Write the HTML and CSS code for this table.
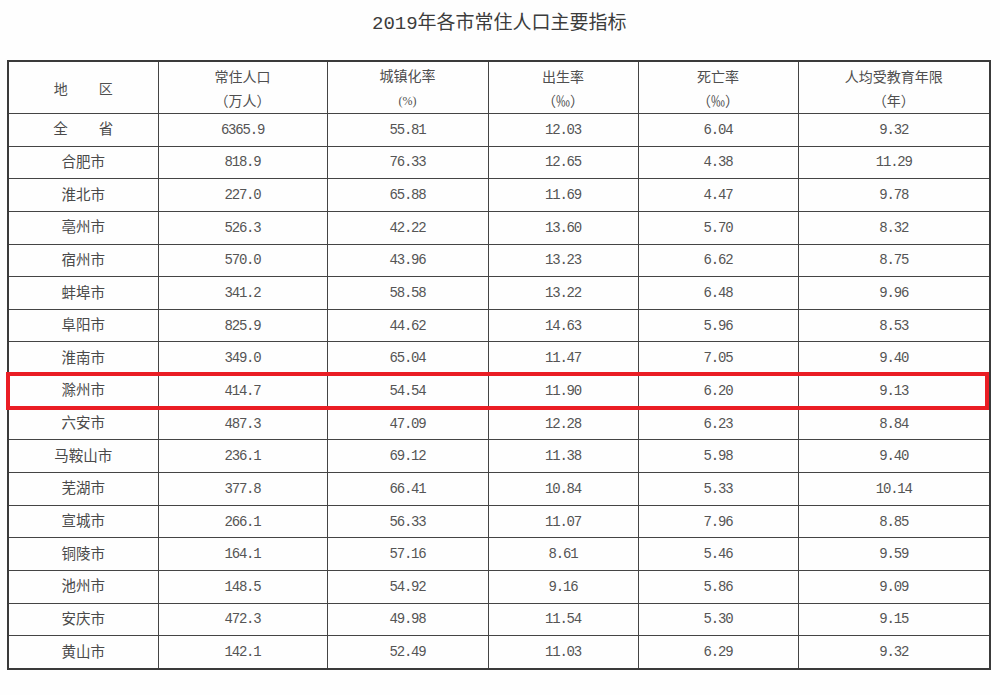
FILE: index.html
```html
<!DOCTYPE html>
<html lang="zh">
<head>
<meta charset="utf-8">
<link rel="stylesheet" href="styles.css">
</head>
<body>
<div class="page">
  <div class="title">2019年各市常住人口主要指标</div>
  <div class="wrap">
    <table class="data">
      <colgroup>
        <col class="c1"><col class="c2"><col class="c3"><col class="c4"><col class="c5"><col class="c6">
      </colgroup>
      <thead>
        <tr>
          <th><span class="spread">地<span class="gap"></span>区</span></th>
          <th>常住人口<br>（万人）</th>
          <th>城镇化率<br><span class="pct">(%)</span></th>
          <th>出生率<br>（‰）</th>
          <th>死亡率<br>（‰）</th>
          <th>人均受教育年限<br>（年）</th>
        </tr>
      </thead>
      <tbody>
        <tr><td class="name"><span class="spread">全<span class="gap"></span>省</span></td><td class="num">6365.9</td><td class="num">55.81</td><td class="num">12.03</td><td class="num">6.04</td><td class="num">9.32</td></tr>
        <tr><td class="name">合肥市</td><td class="num">818.9</td><td class="num">76.33</td><td class="num">12.65</td><td class="num">4.38</td><td class="num">11.29</td></tr>
        <tr><td class="name">淮北市</td><td class="num">227.0</td><td class="num">65.88</td><td class="num">11.69</td><td class="num">4.47</td><td class="num">9.78</td></tr>
        <tr><td class="name">亳州市</td><td class="num">526.3</td><td class="num">42.22</td><td class="num">13.60</td><td class="num">5.70</td><td class="num">8.32</td></tr>
        <tr><td class="name">宿州市</td><td class="num">570.0</td><td class="num">43.96</td><td class="num">13.23</td><td class="num">6.62</td><td class="num">8.75</td></tr>
        <tr><td class="name">蚌埠市</td><td class="num">341.2</td><td class="num">58.58</td><td class="num">13.22</td><td class="num">6.48</td><td class="num">9.96</td></tr>
        <tr><td class="name">阜阳市</td><td class="num">825.9</td><td class="num">44.62</td><td class="num">14.63</td><td class="num">5.96</td><td class="num">8.53</td></tr>
        <tr><td class="name">淮南市</td><td class="num">349.0</td><td class="num">65.04</td><td class="num">11.47</td><td class="num">7.05</td><td class="num">9.40</td></tr>
        <tr class="hl"><td class="name">滁州市</td><td class="num">414.7</td><td class="num">54.54</td><td class="num">11.90</td><td class="num">6.20</td><td class="num">9.13</td></tr>
        <tr><td class="name">六安市</td><td class="num">487.3</td><td class="num">47.09</td><td class="num">12.28</td><td class="num">6.23</td><td class="num">8.84</td></tr>
        <tr><td class="name">马鞍山市</td><td class="num">236.1</td><td class="num">69.12</td><td class="num">11.38</td><td class="num">5.98</td><td class="num">9.40</td></tr>
        <tr><td class="name">芜湖市</td><td class="num">377.8</td><td class="num">66.41</td><td class="num">10.84</td><td class="num">5.33</td><td class="num">10.14</td></tr>
        <tr><td class="name">宣城市</td><td class="num">266.1</td><td class="num">56.33</td><td class="num">11.07</td><td class="num">7.96</td><td class="num">8.85</td></tr>
        <tr><td class="name">铜陵市</td><td class="num">164.1</td><td class="num">57.16</td><td class="num">8.61</td><td class="num">5.46</td><td class="num">9.59</td></tr>
        <tr><td class="name">池州市</td><td class="num">148.5</td><td class="num">54.92</td><td class="num">9.16</td><td class="num">5.86</td><td class="num">9.09</td></tr>
        <tr><td class="name">安庆市</td><td class="num">472.3</td><td class="num">49.98</td><td class="num">11.54</td><td class="num">5.30</td><td class="num">9.15</td></tr>
        <tr><td class="name">黄山市</td><td class="num">142.1</td><td class="num">52.49</td><td class="num">11.03</td><td class="num">6.29</td><td class="num">9.32</td></tr>
      </tbody>
    </table>
    <div class="redbox"></div>
  </div>
</div>
</body>
</html>
```

FILE: styles.css
```css
html, body {
  margin: 0;
  padding: 0;
  background: #fefefe;
}
body {
  font-family: "Noto Sans CJK SC", "Liberation Serif", serif;
  color: #4a4a4a;
}
.page {
  width: 1000px;
  height: 695px;
  padding-left: 7px;
  box-sizing: border-box;
}
.title {
  height: 60px;
  box-sizing: border-box;
  padding-top: 11px;
  padding-left: 365px;
  font-size: 19px;
  line-height: 26px;
  letter-spacing: 0;
  color: #3c3c3c;
  font-family: "Liberation Mono", "Noto Sans CJK SC", monospace;
}
.wrap {
  position: relative;
  width: 982px;
}
.data {
  width: 982px;
  border-collapse: collapse;
  table-layout: fixed;
  border: 2px solid #3a3a3a;
}
.c1 { width: 150px; }
.c2 { width: 169px; }
.c3 { width: 161px; }
.c4 { width: 150px; }
.c5 { width: 160px; }
.c6 { width: 192px; }
.data th, .data td {
  border: 1px solid #444;
  text-align: center;
  padding: 0;
  font-weight: normal;
}
.data th {
  height: 51px;
  font-size: 14px;
  line-height: 24px;
  color: #4f4f4f;
}
.data td {
  height: 31.65px;
  font-size: 14px;
  line-height: 20px;
}
.data td.name {
  font-size: 14.5px;
  color: #4a4a4a;
  padding-bottom: 3px;
  height: 28.65px;
}
.data td.num {
  font-family: "Liberation Mono", monospace;
  font-size: 14px;
  letter-spacing: -1.2px;
  color: #555;
}
.spread {
  display: inline-flex;
  align-items: center;
}
.gap {
  display: inline-block;
  width: 31px;
}
.pct {
  font-family: "Liberation Serif", serif;
  font-size: 12px;
}
.redbox {
  position: absolute;
  left: -1px;
  top: 312px;
  width: 983px;
  height: 38px;
  border: 4px solid #ea1d24;
  box-sizing: border-box;
  pointer-events: none;
}
```
